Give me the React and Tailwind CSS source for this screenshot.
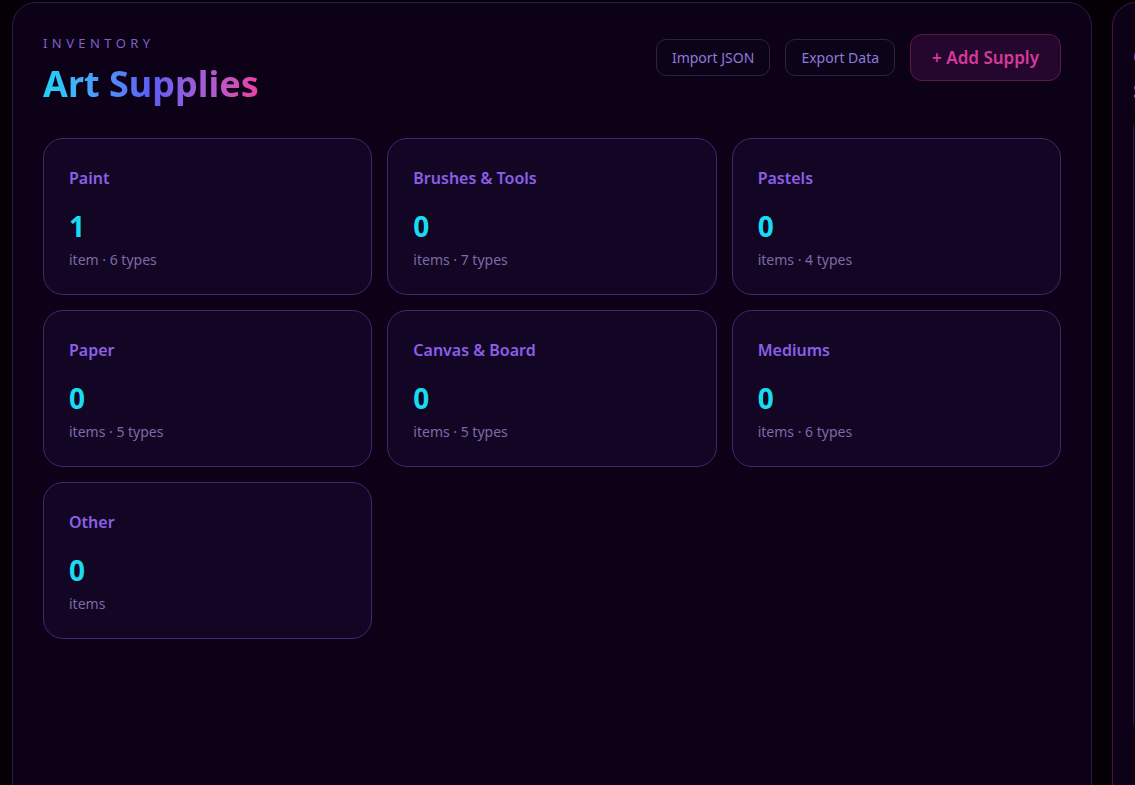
import React from "react";

const cards = [
  { title: "Paint", count: 1, sub: "item · 6 types" },
  { title: "Brushes & Tools", count: 0, sub: "items · 7 types" },
  { title: "Pastels", count: 0, sub: "items · 4 types" },
  { title: "Paper", count: 0, sub: "items · 5 types" },
  { title: "Canvas & Board", count: 0, sub: "items · 5 types" },
  { title: "Mediums", count: 0, sub: "items · 6 types" },
  { title: "Other", count: 0, sub: "items" },
];

export default function App() {
  return (
    <div
      className="w-[1135px] h-[785px] overflow-hidden bg-[#040006] flex gap-[20px] pl-[12px] pt-[2px]"
      style={{ fontFamily: '"Noto Sans", "Open Sans", sans-serif' }}
    >
      <div className="w-[1080px] shrink-0 h-[820px] rounded-[24px] border border-[#2a1d45] bg-[#0c0116] px-[30px] pt-[31px]">
        <div className="flex items-start justify-between">
          <div>
            <div className="text-[13px] leading-[18px] tracking-[0.34em] text-[#7b62c6]">INVENTORY</div>
            <h1 className="mt-[9px] text-[36px] leading-[46px] font-bold bg-gradient-to-r from-[#19d3f5] via-[#5b5cf7] to-[#ec3ea6] bg-clip-text text-transparent w-fit">
              Art Supplies
            </h1>
          </div>
          <div className="flex items-center gap-[15px]">
            <button className="h-[37px] px-[15px] rounded-[10px] border border-[#2c2247] bg-[#0d0319] text-[14px] text-[#8f79dc]">
              Import JSON
            </button>
            <button className="h-[37px] px-[15px] rounded-[10px] border border-[#2c2247] bg-[#0d0319] text-[14px] text-[#8f79dc]">
              Export Data
            </button>
            <button className="h-[47px] px-[21px] rounded-[12px] border border-[#5a1a4c] bg-[#25072e] text-[17px] font-semibold text-[#d43a9a]">
              + Add Supply
            </button>
          </div>
        </div>
        <div className="mt-[31px] grid grid-cols-3 gap-[15px] w-[1018px]">
          {cards.map((c) => (
            <div
              key={c.title}
              className="h-[157px] rounded-[20px] border border-[#3b2a6e] bg-[#130625] px-[25px] pt-[28px]"
            >
              <div className="text-[16px] leading-[22px] font-semibold text-[#8b5fe8]">{c.title}</div>
              <div className="mt-[20px] text-[28px] leading-[34px] font-bold text-[#19dcf0]">{c.count}</div>
              <div className="mt-[7px] text-[14px] leading-[20px] text-[#7d6aa6]">{c.sub}</div>
            </div>
          ))}
        </div>
      </div>
      <div className="w-[400px] shrink-0 h-[820px] rounded-[24px] border border-[#4a1440] bg-[#0c0116] px-[20px] pt-[40px]">
        <div className="text-[20px] leading-[28px] font-bold text-[#d43a9a]">Quick Add</div>
        <div className="mt-[6px] text-[20px] leading-[28px] font-bold text-[#d43a9a]">Supply</div>
        <div className="mt-[20px] h-[600px] border-l border-[#2a1d45]"></div>
      </div>
    </div>
  );
}
